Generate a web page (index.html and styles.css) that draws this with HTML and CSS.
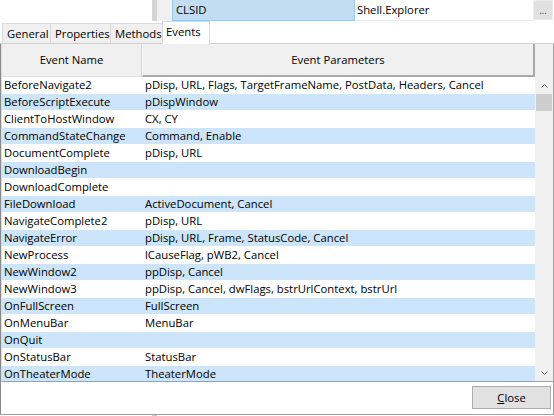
FILE: index.html
```html
<!DOCTYPE html>
<html>
<head>
<meta charset="utf-8">
<link rel="stylesheet" href="styles.css">
</head>
<body>
<div class="top">
  <div class="top-left"></div>
  <div class="splitter"></div>
  <div class="gutter"></div>
  <div class="prop-name">CLSID</div>
  <div class="prop-value">Shell.Explorer</div>
  <div class="ellipsis">...</div>
  <div class="top-right"></div>
</div>
<div class="tabs">
  <div class="tab first">General</div>
  <div class="tab">Properties</div>
  <div class="tab">Methods</div>
  <div class="tab active">Events</div>
  <div class="tab-fill"></div>
</div>
<div class="page">
  <div class="list">
    <div class="header">
      <div class="hcell c1">Event Name</div>
      <div class="hcell c2">Event Parameters</div>
      <div class="hcorner"></div>
    </div>
    <div class="body">
      <div class="rows">
        <div class="row"><div class="c1">BeforeNavigate2</div><div class="c2">pDisp, URL, Flags, TargetFrameName, PostData, Headers, Cancel</div></div>
        <div class="row alt"><div class="c1">BeforeScriptExecute</div><div class="c2">pDispWindow</div></div>
        <div class="row"><div class="c1">ClientToHostWindow</div><div class="c2">CX, CY</div></div>
        <div class="row alt"><div class="c1">CommandStateChange</div><div class="c2">Command, Enable</div></div>
        <div class="row"><div class="c1">DocumentComplete</div><div class="c2">pDisp, URL</div></div>
        <div class="row alt"><div class="c1">DownloadBegin</div><div class="c2"></div></div>
        <div class="row"><div class="c1">DownloadComplete</div><div class="c2"></div></div>
        <div class="row alt"><div class="c1">FileDownload</div><div class="c2">ActiveDocument, Cancel</div></div>
        <div class="row"><div class="c1">NavigateComplete2</div><div class="c2">pDisp, URL</div></div>
        <div class="row alt"><div class="c1">NavigateError</div><div class="c2">pDisp, URL, Frame, StatusCode, Cancel</div></div>
        <div class="row"><div class="c1">NewProcess</div><div class="c2">lCauseFlag, pWB2, Cancel</div></div>
        <div class="row alt"><div class="c1">NewWindow2</div><div class="c2">ppDisp, Cancel</div></div>
        <div class="row"><div class="c1">NewWindow3</div><div class="c2">ppDisp, Cancel, dwFlags, bstrUrlContext, bstrUrl</div></div>
        <div class="row alt"><div class="c1">OnFullScreen</div><div class="c2">FullScreen</div></div>
        <div class="row"><div class="c1">OnMenuBar</div><div class="c2">MenuBar</div></div>
        <div class="row alt"><div class="c1">OnQuit</div><div class="c2"></div></div>
        <div class="row"><div class="c1">OnStatusBar</div><div class="c2">StatusBar</div></div>
        <div class="row alt"><div class="c1">OnTheaterMode</div><div class="c2">TheaterMode</div></div>
      </div>
      <div class="scrollbar">
        <div class="arrow"><svg width="7" height="4" viewBox="0 0 7 4"><polyline points="0.5,3.5 3.5,0.5 6.5,3.5" fill="none" stroke="#606060" stroke-width="1"/></svg></div>
        <div class="thumb"></div>
        <div class="track"></div>
        <div class="arrow"><svg width="7" height="4" viewBox="0 0 7 4"><polyline points="0.5,0.5 3.5,3.5 6.5,0.5" fill="none" stroke="#606060" stroke-width="1"/></svg></div>
      </div>
    </div>
  </div>
  <div class="footer">
    <button class="btn"><span class="u">C</span>lose</button>
  </div>
</div>
<div class="bottom-strip">
  <div class="bs-left"></div>
  <div class="bs-splitter"></div>
</div>
</body>
</html>
```
FILE: styles.css
```css
html, body {
  margin: 0;
  padding: 0;
  background: #ffffff;
}
body {
  width: 554px;
  height: 416px;
  overflow: hidden;
  font-family: "Open Sans", "Noto Sans", sans-serif;
  font-size: 11.3px;
  color: #000;
}
.top {
  display: flex;
  height: 21px;
}
.top-left {
  width: 152px;
  background: #fff;
}
.splitter {
  width: 5px;
  background: #d4d4d4;
}
.gutter {
  width: 15px;
  background: #f0f0f0;
}
.prop-name {
  background: #c2ddf1;
  border-left: 1px solid #99c8ea;
  border-right: 1px solid #99c8ea;
  border-bottom: 1px solid #99c8ea;
  padding-left: 3px;
  line-height: 20px;
  box-sizing: border-box;
  width: 183px;
}
.prop-value {
  width: 178px;
  padding-left: 2px;
  line-height: 20px;
  box-sizing: border-box;
  border-bottom: 1px solid #ececec;
}
.ellipsis {
  width: 20px;
  height: 20px;
  box-sizing: border-box;
  background: #e1e1e1;
  border: 1px solid #ececec;
  font-size: 9px;
  text-align: center;
  line-height: 20px;
  color: #333;
}
.top-right {
  flex: 1;
}
.tabs {
  display: flex;
  align-items: flex-end;
  height: 22px;
  padding-left: 2px;
  border-bottom: 1px solid #d0d0d0;
}
.tab {
  height: 20px;
  line-height: 19px;
  padding: 0 2px 0 4px;
  background: #f0f0f0;
  border-top: 1px solid #d9d9d9;
  border-right: 1px solid #d9d9d9;
  box-sizing: border-box;
  white-space: nowrap;
  overflow: hidden;
}
.tab.first {
  border-left: 1px solid #d9d9d9;
  width: 49px;
}
.tab:nth-child(2) { width: 60px; }
.tab:nth-child(3) { width: 52px; }
.tab.active {
  width: 48px;
  height: 23px;
  margin-bottom: -1px;
  margin-left: -1px;
  background: #fff;
  border-left: 1px solid #d9d9d9;
  line-height: 20px;
  padding-left: 3px;
}
.tab-fill {
  flex: 1;
}
.page {
  border-left: 1px solid #8a8a8a;
  border-right: 1px solid #a0a0a0;
  border-bottom: 1px solid #a0a0a0;
}
.list {
  border-left: 1px solid #dcdcdc;
  border-bottom: 1px solid #a0a0a0;
}
.header {
  display: flex;
  height: 33px;
  background: #f0f0f0;
}
.hcell {
  box-sizing: border-box;
  text-align: center;
  line-height: 32px;
  background: #f0f0f0;
  height: 33px;
}
.hcell.c1 {
  width: 140px;
  border-right: 1px solid #d5d5d5;
  border-bottom: 1px solid #e3e3e3;
}
.hcell.c2 {
  width: 393px;
  border-right: 2px solid #a9a9a9;
  border-bottom: 2px solid #a9a9a9;
  border-left: 1px solid #ffffff;
  line-height: 31px;
}
.hcorner {
  flex: 1;
  background: #f0f0f0;
}
.body {
  display: flex;
  height: 304px;
  overflow: hidden;
}
.rows {
  width: 533px;
}
.row {
  display: flex;
  height: 17px;
  box-sizing: border-box;
  border-bottom: 1px solid #ffffff;
  line-height: 16px;
  white-space: nowrap;
}
.row.alt {
  background: #cce5fa;
}
.row .c1 {
  width: 140px;
  padding-left: 2px;
  box-sizing: border-box;
}
.row .c2 {
  width: 393px;
  padding-left: 3px;
  box-sizing: border-box;
}
.scrollbar {
  flex: 1;
  display: flex;
  flex-direction: column;
  background: #f0f0f0;
}
.arrow {
  height: 17px;
  display: flex;
  align-items: center;
  justify-content: center;
}
.arrow svg { display: block; }
.thumb {
  height: 17px;
  margin: 0 1px;
  background: #cdcdcd;
}
.track {
  flex: 1;
}
.footer {
  display: flex;
  justify-content: flex-end;
  height: 32px;
  padding: 4px 2px 0 0;
  box-sizing: border-box;
}
.btn {
  width: 79px;
  height: 23px;
  background: #e1e1e1;
  border: 1px solid #adadad;
  font-family: "Open Sans", "Noto Sans", sans-serif;
  font-size: 11.3px;
  color: #000;
  padding: 0;
  line-height: 20px;
}
.u { text-decoration: underline; }
.bottom-strip {
  display: flex;
  height: 1px;
}
.bs-left { width: 152px; }
.bs-splitter { width: 5px; background: #c8c8c8; }
```
